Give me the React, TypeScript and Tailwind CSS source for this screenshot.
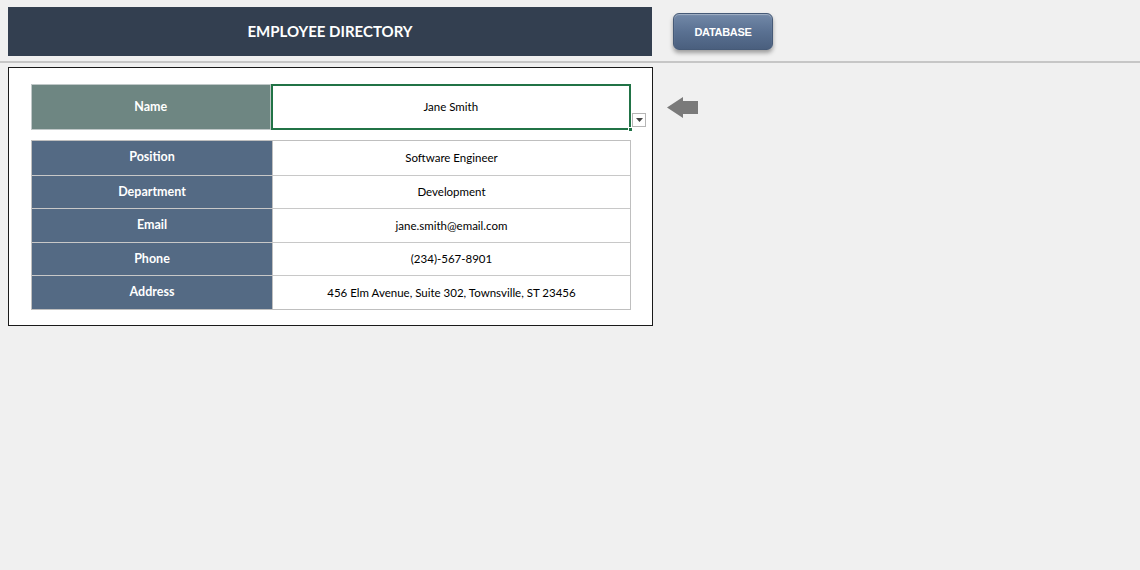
const ROWS = [
  { label: "Position", value: "Software Engineer" },
  { label: "Department", value: "Development" },
  { label: "Email", value: "jane.smith@email.com" },
  { label: "Phone", value: "(234)-567-8901" },
  { label: "Address", value: "456 Elm Avenue, Suite 302, Townsville, ST 23456" },
]

function LeftArrow() {
  return (
    <svg width="32" height="21" viewBox="0 0 32 21" className="block">
      <path d="M0 10.5 L16 0 L16 4 L31 4 L31 17 L16 17 L16 21 Z" fill="#7a7a7a" />
    </svg>
  )
}

export default function App() {
  return (
    <div className="w-[1140px] h-[570px] bg-[#f0f0f0] font-['Lato','Open_Sans',sans-serif] text-black overflow-hidden">
      {/* header */}
      <div className="flex items-start h-[61px] pl-[8px] pt-[7px]">
        <div className="w-[644px] h-[49px] bg-[#333f50] flex items-center justify-center">
          <span className="text-white font-bold text-[15px]">EMPLOYEE DIRECTORY</span>
        </div>
        <button className="ml-[21px] mt-[6px] w-[100px] h-[37px] rounded-[6px] bg-gradient-to-b from-[#7389a8] via-[#5a7192] to-[#4a5f7e] border border-[#465a77] shadow-[0_3px_4px_rgba(0,0,0,0.35),inset_0_1px_1px_rgba(255,255,255,0.35)] flex items-center justify-center">
          <span className="text-white font-bold text-[11px] font-['Liberation_Sans',Arial,sans-serif] tracking-[-0.3px] mt-[1px]">DATABASE</span>
        </button>
      </div>
      <div className="h-[2px] bg-[#c6c6c6]" />

      {/* body */}
      <div className="flex items-start pl-[8px] pt-[4px]">
        <div className="w-[645px] h-[259px] bg-white border border-[#1a1a1a] pl-[22px] pt-[16px]">
          {/* name selector */}
          <div className="relative flex h-[46px] w-[600px]">
            <div className="w-[240px] h-full bg-[#6e8682] border border-[#c0c8c8] flex items-center justify-center text-white font-bold text-[12.5px]">
              Name
            </div>
            <div className="w-[361px] h-full border-2 border-[#217346] flex items-center justify-center text-[11.5px]">
              Jane Smith
            </div>
            <div className="absolute left-[597px] bottom-[-2px] w-[5px] h-[5px] bg-[#217346] border border-white" />
            <div className="absolute left-[601px] top-[29px] w-[14px] h-[14px] bg-white border border-[#b5b5b5] flex items-center justify-center">
              <svg width="7" height="4" viewBox="0 0 7 4">
                <path d="M0 0 L7 0 L3.5 4 Z" fill="#444" />
              </svg>
            </div>
          </div>

          {/* details */}
          <div className="mt-[10px] w-[600px] border border-[#bfbfbf]">
            {ROWS.map((row, i) => (
              <div key={row.label} className={`flex h-[33.6px] ${i > 0 ? "border-t border-[#c8c8c8]" : ""}`}>
                <div className="w-[240px] bg-[#546a84] flex items-center justify-center text-white font-bold text-[12.5px]">
                  {row.label}
                </div>
                <div className="flex-1 border-l border-[#bfbfbf] flex items-center justify-center text-[11.5px]">
                  {row.value}
                </div>
              </div>
            ))}
          </div>
        </div>

        <div className="ml-[14px] mt-[30px]">
          <LeftArrow />
        </div>
      </div>
    </div>
  )
}
